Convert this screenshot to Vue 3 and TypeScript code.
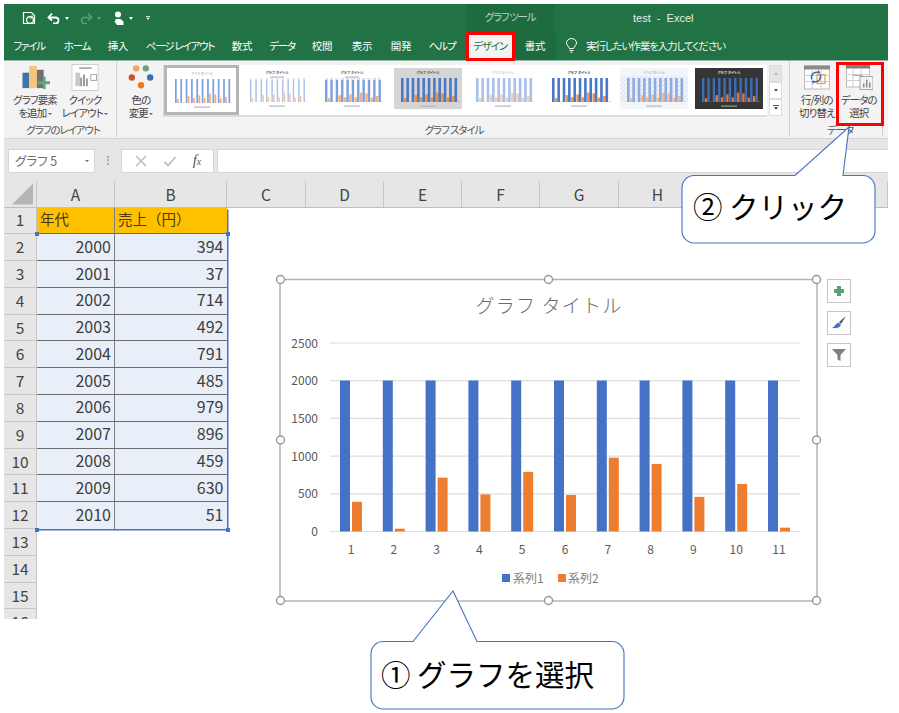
<script setup lang="ts">
const tabs = ['ファイル', 'ホーム', '挿入', 'ページ レイアウト', '数式', 'データ', '校閲', '表示', '開発', 'ヘルプ', 'デザイン', '書式'];
const isKana = (s: string) => /^[ァ-ヶー ]+$/.test(s);
const columns = ['A', 'B', 'C', 'D', 'E', 'F', 'G', 'H', '', '', ''];
const rowNumbers = Array.from({ length: 16 }, (_, i) => i + 1);
const sales = [394, 37, 714, 492, 791, 485, 979, 896, 459, 630, 51];
const years = sales.map((_, i) => 2000 + i);

// plot geometry, in page pixels
const plotLeft = 330;
const plotRight = 800;
const plotBase = 531.5;
const perUnit = 188.5 / 2500;
const axisTicks = [2500, 2000, 1500, 1000, 500, 0];
const barX = (i: number) => 340 + 42.8 * i;
const tickY = (v: number) => plotBase - v * perUnit;

interface Thumb {
  bg: string;
  blue: string;
  orange: string;
  title: string;
  width: number;
  dots?: boolean;
  legendTop?: boolean;
  stripes?: boolean;
  bold?: boolean;
}

const thumbs: Thumb[] = [
  { bg: '#fff', blue: '#7c9fdc', orange: '#f4ab78', title: '#999', width: 1.7 },
  { bg: '#fff', blue: '#a8bfe8', orange: '#f6c19c', title: '#666', width: 1.4, dots: true, legendTop: true, bold: true },
  { bg: '#fff', blue: '#7d9fdb', orange: '#f5b081', title: '#666', width: 2.4, dots: true, legendTop: true, bold: true },
  { bg: '#d5d5d5', blue: '#4c79c6', orange: '#f08a3c', title: '#555', width: 2.6, bold: true },
  { bg: '#fff', blue: '#a9c0ea', orange: '#f8cdb0', title: '#aaa', width: 2.6 },
  { bg: '#fff', blue: '#4a78c8', orange: '#f0914f', title: '#555', width: 2.6, bold: true },
  { bg: '#f2f5fa', blue: '#8eaadf', orange: '#f5b58a', title: '#999', width: 2.6, stripes: true },
  { bg: '#353535', blue: '#3d6cb9', orange: '#e8772e', title: '#ddd', width: 2.4, bold: true },
];
const thumbBars = sales.map((v, i) => ({ x: 7 + i * 5.35, h: (v / 2500) * 24 }));
</script>

<template>
  <div class="page">
    <div class="excel">
      <header class="titlebar">
        <div class="quick">
          <svg width="14" height="14" viewBox="0 0 14 14" class="q-save">
            <path d="M1.5 1.5h8l3 3v8h-11z" fill="none" stroke="#fff" stroke-width="1.2" />
            <circle cx="8" cy="9" r="3.4" fill="#217346" stroke="#fff" stroke-width="1.2" />
            <path d="M10 4.5v2.5h-2.400" fill="none" stroke="#fff" />
          </svg>
          <svg width="14" height="12" viewBox="0 0 14 12" class="q-undo">
            <path d="M2 5.500h6.500a3 3 0 0 1 0 6H6" fill="none" stroke="#fff" stroke-width="1.800" />
            <path d="M5 1.500 1.500 5.500 5 8.500" fill="none" stroke="#fff" stroke-width="1.800" />
          </svg>
          <i class="caret" />
          <svg width="14" height="12" viewBox="0 0 14 12" class="q-redo">
            <path d="M12 5.500H5.500a3 3 0 0 0 0 6H8" fill="none" stroke="#5f9c7d" stroke-width="1.600" />
            <path d="M9 1.500l3.500 4L9 8.500" fill="none" stroke="#5f9c7d" stroke-width="1.600" />
          </svg>
          <i class="caret dim" />
          <svg width="12" height="15" viewBox="0 0 12 15" class="q-touch">
            <circle cx="5" cy="3.500" r="3" fill="#fff" />
            <path d="M3 8h4.500l3 2.500v3.500H4L1.500 10.500z" fill="#fff" />
          </svg>
          <i class="caret" />
          <i class="custom" />
        </div>
        <div class="tool-label">グラフ ツール</div>
        <div class="doc-name">test &nbsp;-&nbsp; Excel</div>
      </header>

      <nav class="tabs">
        <span
          v-for="tab in tabs"
          :key="tab"
          class="tab"
          :class="{ active: tab === 'デザイン', context: tab === '書式', kana: isKana(tab) }"
        >{{ tab }}</span>
        <span class="search">
          <svg width="13" height="15" viewBox="0 0 13 15">
            <path d="M4.500 10.500C4 8.500 1.500 7.500 1.500 5a5 4.500 0 0 1 10 0c0 2.500-2.500 3.500-3 5.500z" fill="none" stroke="#fff" />
            <path d="M4.500 12.500h4M5.500 14.300h2" stroke="#fff" />
          </svg>
          実行したい作業を入力してください
        </span>
      </nav>

      <section class="ribbon">
        <div class="group layout-group">
          <div class="group-body">
            <div class="big-btn">
              <svg width="30" height="28" viewBox="0 0 30 28">
                <rect x="2" y="9" width="7" height="16" fill="#3f73a8" />
                <rect x="9" y="2" width="8" height="23" fill="#f3c67c" />
                <rect x="17" y="6" width="7" height="19" fill="#707070" />
                <path d="M23 13v5h-6v3h6v5h3v-5h5v-3h-5v-5z" fill="#5fa67e" />
              </svg>
              <span>グラフ要素<br />を追加 <i class="mini" /></span>
            </div>
            <div class="big-btn">
              <svg width="30" height="28" viewBox="0 0 30 28">
                <rect x="1.500" y="0.500" width="27" height="27" fill="#fff" stroke="#cfcfcf" />
                <rect x="9" y="3.500" width="13" height="1.500" fill="#999" />
                <rect x="5" y="9" width="5" height="14" fill="#c9c9c9" />
                <path d="M10 23v-9h2v9zm3 0v-12h2v12zm3 0v-8h2v8z" fill="#9a9a9a" />
                <rect x="21" y="11" width="6" height="6" fill="none" stroke="#a5a5a5" />
              </svg>
              <span>クイック<br />レイアウト <i class="mini" /></span>
            </div>
          </div>
          <div class="group-label">グラフのレイアウト</div>
        </div>

        <div class="group style-group">
          <div class="group-body">
            <div class="big-btn color-btn">
              <svg width="28" height="28" viewBox="0 0 28 28">
                <circle cx="9" cy="4.500" r="3.300" fill="#f0a565" />
                <circle cx="19" cy="4.500" r="3.300" fill="#6a9f83" />
                <circle cx="4.500" cy="14" r="3.300" fill="#c9552a" />
                <circle cx="23.500" cy="14" r="3.300" fill="#3b70b2" />
                <circle cx="14" cy="22" r="3.300" fill="#e9791f" />
              </svg>
              <span>色の<br />変更 <i class="mini" /></span>
            </div>
            <div class="gallery">
              <div class="thumbs">
                <div v-for="(t, n) in thumbs" :key="n" class="thumb" :class="{ selected: n === 0 }">
                  <svg width="68" height="41" viewBox="0 0 68 41" :style="{ background: t.bg }">
                    <defs v-if="t.stripes">
                      <pattern id="hatch" width="3" height="3" patternUnits="userSpaceOnUse" patternTransform="rotate(45)">
                        <rect width="1" height="3" fill="#d9e1f0" />
                      </pattern>
                    </defs>
                    <rect v-if="t.stripes" y="8" width="68" height="26" fill="url(#hatch)" />
                    <text x="34" y="6" class="thumb-title" :fill="t.title" :font-weight="t.bold ? 700 : 400">グラフ タイトル</text>
                    <rect v-if="t.legendTop" x="27" y="8.500" width="14" height="1.200" fill="#b7b7c8" />
                    <g v-for="b in thumbBars" :key="b.x">
                      <rect :x="b.x" y="10" :width="t.width" height="24" :fill="t.blue" />
                      <rect :x="b.x + t.width + 0.400" :y="34 - b.h" :width="t.width" :height="b.h" :fill="t.orange" />
                      <rect v-if="t.dots" :x="b.x" y="10" :width="t.width" height="2" fill="#dfe6f3" />
                    </g>
                    <rect x="26" y="37.500" width="16" height="1.200" :fill="t.bg === '#353535' ? '#999' : '#b5b5c5'" />
                  </svg>
                </div>
              </div>
              <div class="gallery-scroll">
                <span class="up"><i class="tri-up" /></span>
                <span class="down"><i class="tri-down" /></span>
                <span class="more"><b /><i class="tri-down" /></span>
              </div>
            </div>
          </div>
          <div class="group-label">グラフ スタイル</div>
        </div>

        <div class="group data-group">
          <div class="group-body">
            <div class="big-btn switch-btn">
              <svg width="28" height="24" viewBox="0 0 28 24">
                <rect x="1.500" y="0.500" width="25" height="23" fill="#fff" stroke="#bbb" />
                <rect x="1" y="0" width="26" height="4" fill="#8a8a8a" />
                <path d="M1 10h26M1 16h26M9 4v20M18 4v20" stroke="#d0d0d0" />
                <rect x="14" y="9" width="8" height="9" fill="none" stroke="#ee9a58" stroke-width="1.200" />
                <path d="M9 14a5 5 0 0 1 6-7M17 7l-2 0 1-2M17 9a5 5 0 0 1-6 7M9 16l2 0-1 2" fill="none" stroke="#2f6db5" stroke-width="1.400" />
              </svg>
              <span>行/列の<br />切り替え</span>
            </div>
            <div class="big-btn select-btn">
              <svg width="28" height="26" viewBox="0 0 28 26">
                <rect x="1.500" y="0.500" width="23" height="22" fill="#fff" stroke="#bbb" />
                <rect x="1" y="0" width="24" height="4" fill="#7f7f7f" />
                <path d="M1 10h24M1 16h24M8 4v19M16 4v19" stroke="#d0d0d0" />
                <path d="M8 11h9v9" fill="none" stroke="#ee9a58" stroke-width="1.200" />
                <rect x="15" y="12" width="13" height="13" fill="#f2f2f2" stroke="#a8a8a8" />
                <path d="M18 23v-4h1.500v4zm3 0v-8h1.500v8zm3 0v-5h1.500v5z" fill="#8d8d8d" />
              </svg>
              <span>データの<br />選択</span>
            </div>
          </div>
          <div class="group-label">データ</div>
        </div>
      </section>

      <section class="formula">
        <div class="name-box">グラフ 5<i class="mini" /></div>
        <div class="grip" />
        <div class="fx-box">
          <svg width="14" height="14" viewBox="0 0 14 14"><path d="M2 2l10 10M12 2 2 12" stroke="#bdbdbd" stroke-width="1.500" /></svg>
          <svg width="14" height="14" viewBox="0 0 14 14"><path d="M1.500 8l3.500 3.500L12.500 3" fill="none" stroke="#bdbdbd" stroke-width="1.800" /></svg>
          <span class="fx">f<small>x</small></span>
        </div>
        <div class="formula-input" />
      </section>

      <section class="sheet">
        <div class="col-heads">
          <div class="corner"><i /></div>
          <div v-for="(c, i) in columns" :key="i" class="col-head">{{ c }}</div>
        </div>
        <div class="sheet-body">
          <div class="row-heads">
            <div v-for="r in rowNumbers" :key="r" class="row-head">{{ r }}</div>
          </div>
          <div class="table">
            <div class="cell title">年代</div>
            <div class="cell title">売上（円）</div>
            <template v-for="(y, i) in years" :key="y">
              <div class="cell num">{{ y }}</div>
              <div class="cell num">{{ sales[i] }}</div>
            </template>
            <i class="grip-dot tl" /><i class="grip-dot tr" /><i class="grip-dot bl" /><i class="grip-dot br" />
          </div>
        </div>
      </section>
    </div>

    <!-- floating chart over the sheet -->
    <svg class="chart" width="560" height="340" viewBox="272 272 560 340">
      <rect x="280" y="279.500" width="537" height="321.500" fill="#fff" stroke="#b4b4b4" stroke-width="1.500" />
      <text x="549" y="313" class="chart-title">グラフ タイトル</text>
      <g v-for="t in axisTicks" :key="t">
        <line :x1="plotLeft" :x2="plotRight" :y1="tickY(t)" :y2="tickY(t)" stroke="#dedede" stroke-width="1.200" />
        <text x="318" :y="tickY(t) + 4.500" class="axis y">{{ t }}</text>
      </g>
      <g v-for="(v, i) in sales" :key="i">
        <rect :x="barX(i)" y="380.500" width="10" height="151" fill="#4472c4" />
        <rect :x="barX(i) + 12" :y="plotBase - v * perUnit" width="10" :height="v * perUnit" fill="#ed7d31" />
        <text :x="barX(i) + 11" y="553.500" class="axis">{{ i + 1 }}</text>
      </g>
      <rect x="502" y="574" width="8" height="8" fill="#4472c4" />
      <text x="513" y="583" class="legend">系列1</text>
      <rect x="558" y="574" width="8" height="8" fill="#ed7d31" />
      <text x="568" y="583" class="legend">系列2</text>
      <g fill="#fff" stroke="#979797" stroke-width="1.400">
        <circle cx="280.500" cy="279.500" r="4" />
        <circle cx="548.500" cy="279.500" r="4" />
        <circle cx="816.500" cy="279.500" r="4" />
        <circle cx="280.500" cy="440" r="4" />
        <circle cx="816.500" cy="440" r="4" />
        <circle cx="280.500" cy="600.500" r="4" />
        <circle cx="548.500" cy="600.500" r="4" />
        <circle cx="816.500" cy="600.500" r="4" />
      </g>
    </svg>

    <div class="chart-tools">
      <button>
        <svg width="14" height="14" viewBox="0 0 14 14"><path d="M5 2h4v3h3v4H9v3H5V9H2V5h3z" fill="#5b9f7c" /></svg>
      </button>
      <button>
        <svg width="16" height="16" viewBox="0 0 16 16">
          <path d="M15 1 8 7l2 2z" fill="#555" />
          <path d="M7.500 7.500 10 10c-1.500 3-5 3.500-9 3 2.500-1 3-4 6.500-5.500z" fill="#4472c4" />
        </svg>
      </button>
      <button>
        <svg width="16" height="14" viewBox="0 0 16 14"><path d="M1 1h14L9.500 7v6l-3-1.500V7z" fill="#7f7f7f" /></svg>
      </button>
    </div>

    <!-- red highlights -->
    <div class="mark mark-tab" />
    <div class="mark mark-select" />

    <!-- callouts -->
    <svg class="callout callout-two" width="196" height="120" viewBox="681 126 196 120">
      <path d="M694 175.500H795L849 127l-6 48.500H863a12 12 0 0 1 12 12V231a12 12 0 0 1-12 12H694a12 12 0 0 1-12-12V187.500a12 12 0 0 1 12-12z" fill="#fff" stroke="#4472c4" stroke-width="1.100" />
      <text x="693" y="218" class="callout-text">② クリック</text>
    </svg>
    <svg class="callout callout-one" width="258" height="122" viewBox="369 590 258 122">
      <path d="M383 641.500H413L453 591l24 50.500H612a12 12 0 0 1 12 12V697a12 12 0 0 1-12 12H383a12 12 0 0 1-12-12V653.500a12 12 0 0 1 12-12z" fill="#fff" stroke="#4472c4" stroke-width="1.100" />
      <text x="381" y="686" class="callout-text">① グラフを選択</text>
    </svg>
  </div>
</template>

<style>
html,
body {
  margin: 0;
  background: #fff;
}
</style>

<style scoped>
.page {
  position: relative;
  width: 899px;
  height: 713px;
  padding: 4px 11px 0 4px;
  box-sizing: border-box;
  overflow: hidden;
  background: #fff;
  font-family: "Noto Sans CJK JP", "Noto Sans", sans-serif;
  font-feature-settings: "palt";
  color: #444;
}
.excel {
  width: 884px;
}

/* title bar */
.titlebar {
  display: grid;
  grid-template-columns: 462px 88px 1fr;
  height: 28px;
  background: #217346;
  color: #fff;
  align-items: center;
  font-size: 11px;
}
.quick {
  display: flex;
  align-items: center;
  padding-left: 18px;
}
.q-undo {
  margin-left: 11px;
}
.q-redo {
  margin-left: 10px;
}
.q-touch {
  margin-left: 12px;
}
.caret {
  width: 0;
  height: 0;
  margin-left: 4px;
  border: 2.5px solid transparent;
  border-top: 3px solid #fff;
  border-bottom: 0;
}
.caret.dim {
  border-top-color: #5f9c7d;
}
.custom {
  width: 4px;
  height: 4px;
  margin-left: 13px;
  background: #d8e8df;
  clip-path: polygon(0 0, 100% 0, 100% 25%, 0 25%, 0 45%, 100% 45%, 50% 100%, 0 45%);
}
.tool-label {
  height: 100%;
  line-height: 26px;
  text-align: center;
  background: #1f6b40;
  color: #b9d3c4;
  font-size: 10.500px;
  letter-spacing: -1.300px;
}
.doc-name {
  margin-left: 3px;
  padding-left: 76px;
  font-size: 11px;
  color: #e6f0ea;
  font-family: "Liberation Sans", sans-serif;
}

/* tabs */
.tabs {
  display: grid;
  grid-template-columns: 50px 46px 36px 88px 36px 44px 36px 44px 34px 48px 48px 42px 1fr;
  height: 27.500px;
  background: #217346;
  border-bottom: 1px solid #8fb8a3;
  align-items: center;
  color: #fff;
  font-size: 10.500px;
}
.tab {
  display: flex;
  height: 100%;
  align-items: center;
  justify-content: center;
  white-space: nowrap;
  letter-spacing: -0.2px;
}
.tab.kana {
  letter-spacing: -1.200px;
}
.tab.active {
  background: #f3f3f3;
  color: #217346;
}
.tab.context {
  background: #1f6b40;
}
.search {
  display: flex;
  align-items: center;
  gap: 8px;
  padding-left: 9px;
  font-size: 10.500px;
  letter-spacing: -1.100px;
  white-space: nowrap;
  color: #f0f6f2;
}

/* ribbon */
.ribbon {
  display: flex;
  height: 78px;
  background: #f3f3f3;
  border-bottom: 1px solid #d4d4d4;
  box-sizing: border-box;
}
.group {
  display: flex;
  flex-direction: column;
  border-right: 1px solid #d2d2d2;
  margin-bottom: 1px;
  box-sizing: border-box;
}
.layout-group {
  width: 113px;
  padding-left: 6px;
}
.style-group {
  width: 673px;
  padding-left: 2px;
}
.data-group {
  width: 93px;
  padding-left: 8px;
}
.group-body {
  display: flex;
  flex: 1;
  min-height: 0;
}
.group-label {
  height: 14px;
  line-height: 14px;
  font-size: 10.500px;
  letter-spacing: -1.100px;
  text-align: center;
  color: #555;
  white-space: nowrap;
}
.big-btn {
  display: flex;
  flex-direction: column;
  align-items: center;
  width: 50px;
  padding-top: 3px;
  font-size: 10.500px;
  line-height: 13.500px;
  letter-spacing: -0.900px;
  text-align: center;
  color: #444;
  white-space: nowrap;
}
.big-btn svg {
  flex: none;
  height: 27px;
  margin-bottom: 2px;
}
.color-btn {
  width: 44px;
}
.switch-btn {
  width: 38px;
}
.select-btn {
  width: 47px;
}
.mini {
  display: inline-block;
  width: 0;
  height: 0;
  vertical-align: middle;
  border: 2px solid transparent;
  border-top: 2.500px solid #666;
  border-bottom: 0;
}

/* gallery */
.gallery {
  display: flex;
  margin-top: 4px;
  height: 52px;
}
.thumbs {
  display: grid;
  grid-template-columns: repeat(8, 75.400px);
  height: 52px;
  background: #fff;
  box-sizing: border-box;
  border-bottom: 2px solid #dcdcdc;
  border-left: 1px solid #dcdcdc;
}
.thumb {
  display: flex;
  align-items: center;
  justify-content: center;
  padding-bottom: 2px;
}
.thumb.selected {
  height: 50px;
  box-sizing: border-box;
  border: 3px solid #b6b6b6;
  padding: 0;
}
.thumb-title {
  font-size: 3.500px;
  text-anchor: middle;
}
.gallery-scroll {
  display: flex;
  flex-direction: column;
  width: 13px;
  margin-left: 2px;
}
.gallery-scroll span {
  display: flex;
  flex-direction: column;
  height: 17px;
  align-items: center;
  justify-content: center;
  gap: 1px;
  box-sizing: border-box;
  border: 1px solid #dcdcdc;
  background: #fff;
}
.gallery-scroll .up {
  background: #e4e4e4;
}
.gallery-scroll b {
  width: 6px;
  height: 1px;
  background: #555;
}
.tri-up,
.tri-down {
  width: 0;
  height: 0;
  border: 2.5px solid transparent;
}
.tri-up {
  border-top: 0;
  border-bottom: 3px solid #bbb;
}
.tri-down {
  border-bottom: 0;
  border-top: 3px solid #555;
}

/* formula bar */
.formula {
  display: flex;
  height: 42px;
  padding: 10px 0 7.500px 4px;
  box-sizing: border-box;
  background: #e6e6e6;
  align-items: stretch;
}
.name-box {
  display: flex;
  align-items: center;
  justify-content: space-between;
  width: 87px;
  padding: 0 5px 0 6px;
  box-sizing: border-box;
  background: #fff;
  border: 1px solid #d6d6d6;
  color: #6e6e6e;
  font-size: 12.500px;
}
.grip {
  width: 2px;
  height: 9px;
  margin: 7px 12px 0;
  border-left: 2px dotted #aaa;
  box-sizing: border-box;
}
.fx-box {
  display: flex;
  align-items: center;
  justify-content: space-around;
  width: 93px;
  padding: 0 4px;
  box-sizing: border-box;
  margin-right: 3px;
  background: #fff;
  border: 1px solid #d6d6d6;
}
.fx {
  font-family: "Liberation Serif", serif;
  font-style: italic;
  font-size: 15px;
  color: #555;
}
.fx small {
  font-size: 10px;
}
.formula-input {
  flex: 1;
  background: #fff;
  border: 1px solid #d6d6d6;
  border-right: 0;
}

/* sheet */
.sheet {
  height: 438px;
  overflow: hidden;
}
.col-heads {
  display: grid;
  grid-template-columns: 33px 78px 112px 79px 78px 78px 78px 79px 78px 78px 78px 35px;
  height: 27px;
  background: #e6e6e6;
  border-bottom: 1px solid #c0c0c0;
  box-sizing: border-box;
}
.corner {
  position: relative;
  border-right: 1px solid #c6c6c6;
}
.corner i {
  position: absolute;
  right: 3px;
  bottom: 2px;
  width: 21px;
  height: 21px;
  background: #b5b5b5;
  clip-path: polygon(100% 0, 100% 100%, 0 100%);
}
.col-head {
  display: flex;
  align-items: center;
  justify-content: center;
  border-right: 1px solid #c6c6c6;
  font-size: 15.500px;
  color: #444;
}
.sheet-body {
  display: flex;
}
.row-heads {
  width: 33px;
  flex: none;
}
.row-head {
  display: flex;
  height: 26.800px;
  padding-bottom: 2px;
  box-sizing: border-box;
  align-items: center;
  justify-content: center;
  background: #e6e6e6;
  border-right: 1px solid #c6c6c6;
  border-bottom: 1px solid #c6c6c6;
  font-size: 15.500px;
  color: #444;
}
.table {
  position: relative;
  display: grid;
  grid-template-columns: 78px 111.500px;
  grid-auto-rows: 26.800px;
  align-self: flex-start;
  box-shadow: 1.500px 1.500px 0 #4472c4;
}
.cell {
  display: flex;
  align-items: center;
  box-sizing: border-box;
  font-size: 16px;
  color: #3d3d3d;
  background: #e9eff9;
  border-bottom: 1.500px solid #6d6d6d;
  padding: 0 3px 3px;
}
.cell:nth-child(odd) {
  border-right: 1.500px solid #7d7d7d;
}
.cell:nth-last-child(-n + 6) {
  border-bottom: 0;
}
.cell.title {
  background: #ffc000;
  border-bottom-color: #4f6ea8;
  font-size: 14.500px;
  font-feature-settings: normal;
  color: #4a3a10;
}
.cell.num {
  justify-content: flex-end;
}
.grip-dot {
  position: absolute;
  width: 4px;
  height: 4px;
  background: #4472c4;
}
.tl { left: -2px; top: 24.500px; }
.tr { right: -3px; top: 24.500px; }
.bl { left: -2px; bottom: -3px; }
.br { right: -3px; bottom: -3px; }

/* overlays */
.chart {
  position: absolute;
  left: 272px;
  top: 272px;
  font-family: "Noto Sans CJK JP", "Noto Sans", sans-serif;
  font-feature-settings: normal;
}
.chart-title {
  font-size: 19px;
  font-weight: 300;
  letter-spacing: 1.200px;
  text-anchor: middle;
  fill: #6b6b6b;
}
.axis {
  font-size: 12px;
  text-anchor: middle;
  fill: #595959;
}
.axis.y {
  text-anchor: end;
}
.legend {
  font-size: 12px;
  fill: #7f7f7f;
}
.chart-tools {
  position: absolute;
  left: 827px;
  top: 279px;
  display: flex;
  flex-direction: column;
  gap: 8px;
}
.chart-tools button {
  display: flex;
  width: 24px;
  height: 24px;
  padding: 0;
  align-items: center;
  justify-content: center;
  background: #fff;
  border: 1px solid #c6c6c6;
}
.mark {
  position: absolute;
  box-sizing: border-box;
  border: 3px solid #ff0000;
}
.mark-tab {
  left: 466px;
  top: 32px;
  width: 49px;
  height: 29px;
}
.mark-select {
  left: 836px;
  top: 62px;
  width: 48px;
  height: 64px;
  border-width: 3.500px;
}
.callout {
  position: absolute;
}
.callout-two {
  left: 681px;
  top: 126px;
}
.callout-one {
  left: 369px;
  top: 590px;
}
.callout-text {
  font-family: "Noto Sans CJK JP", sans-serif;
  font-feature-settings: normal;
  font-size: 29.500px;
  fill: #000;
}
</style>
